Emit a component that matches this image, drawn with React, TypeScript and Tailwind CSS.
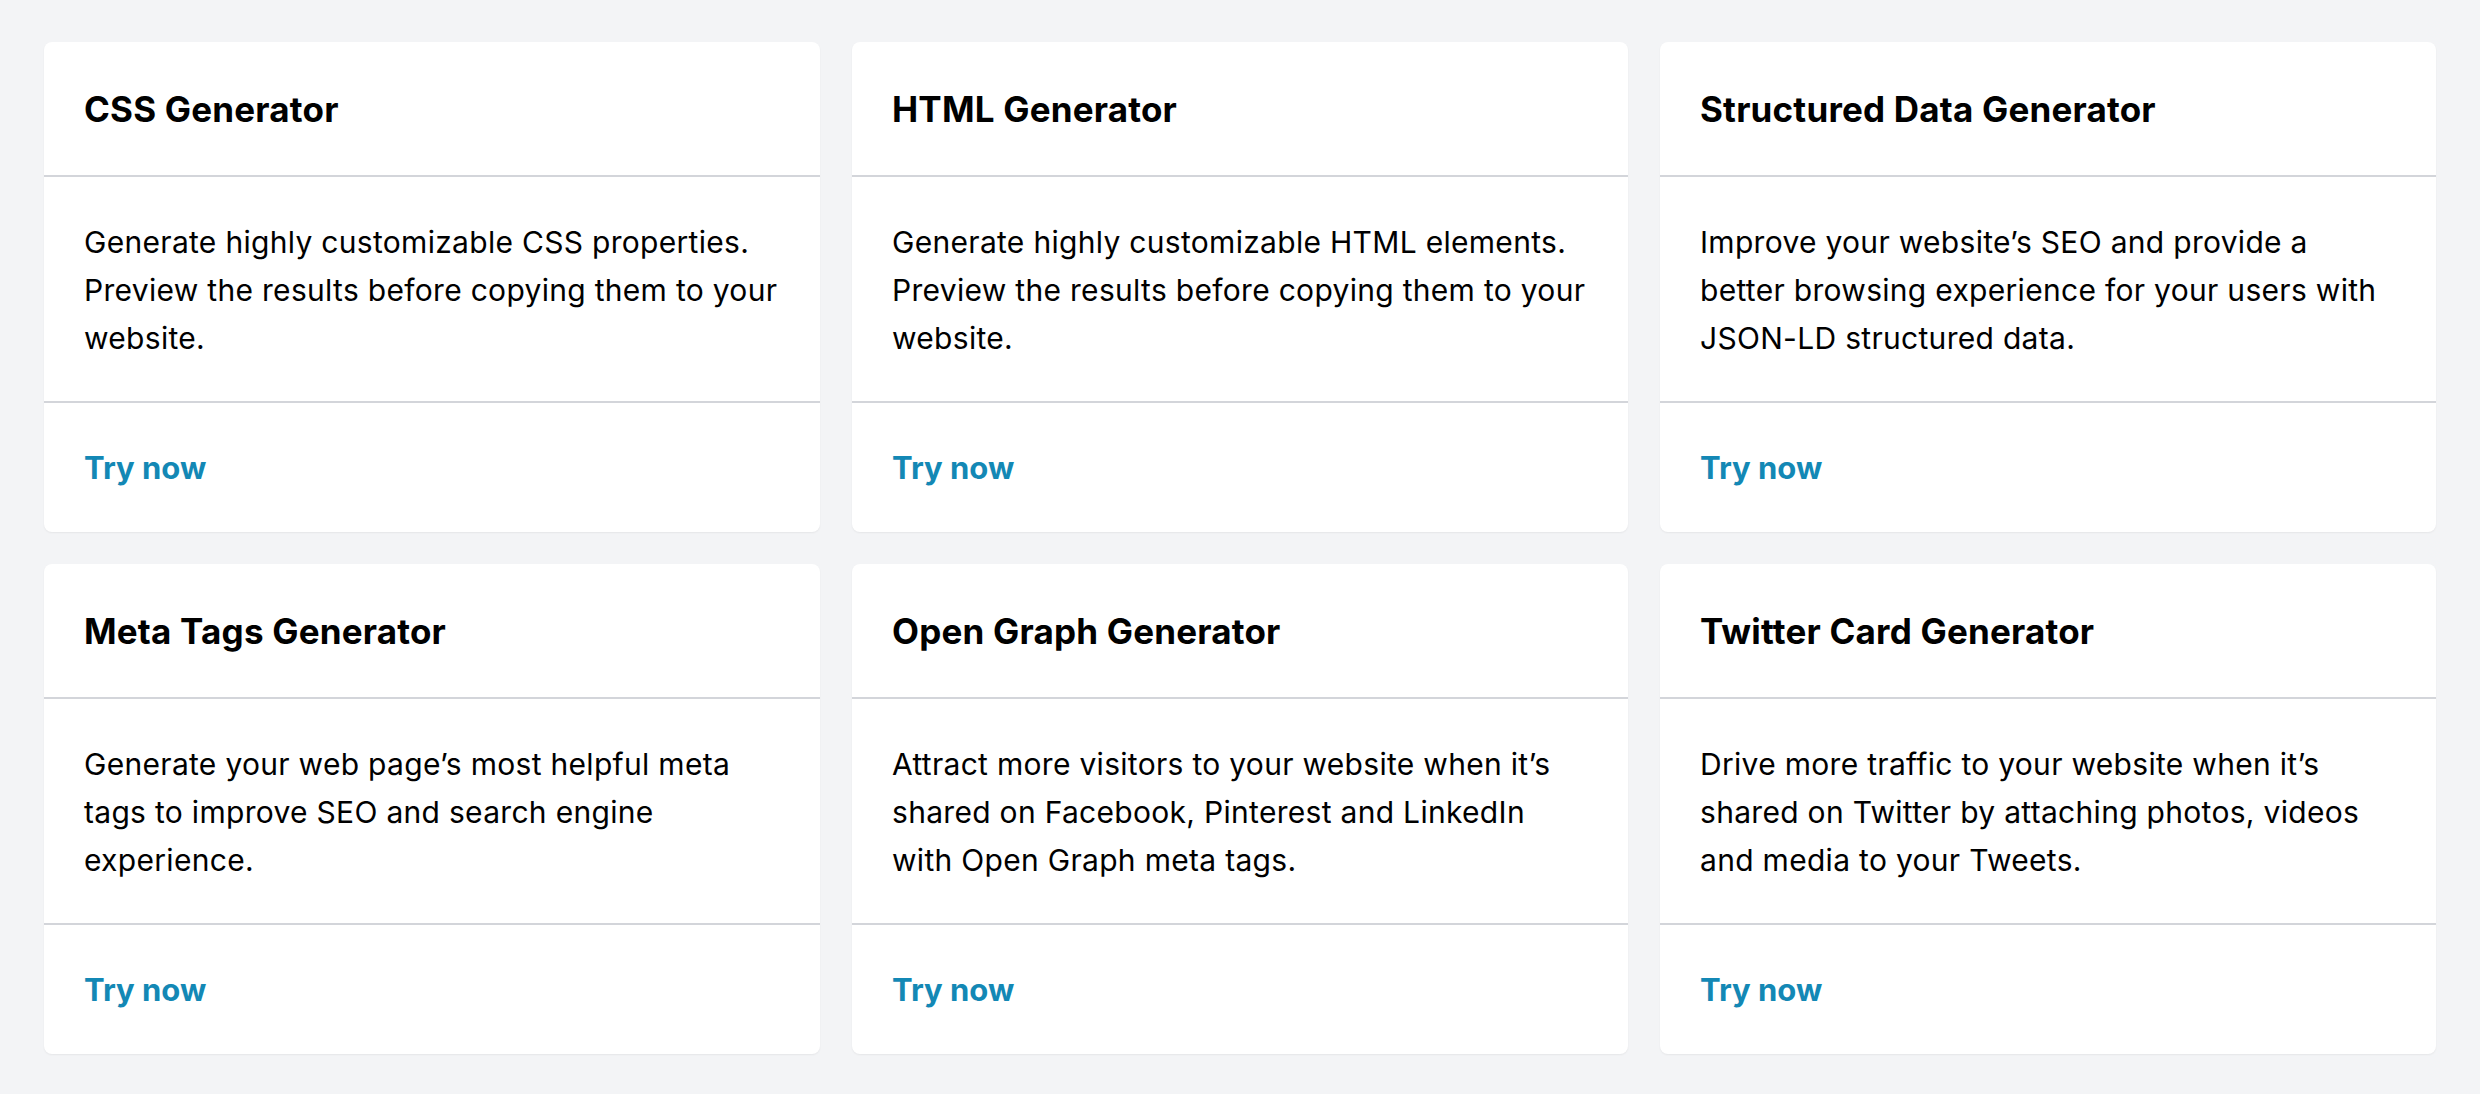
import React from "react";

const cards = [
  {
    title: "CSS Generator",
    body: "Generate highly customizable CSS properties. Preview the results before copying them to your website.",
  },
  {
    title: "HTML Generator",
    body: "Generate highly customizable HTML elements. Preview the results before copying them to your website.",
  },
  {
    title: "Structured Data Generator",
    body: "Improve your website\u2019s SEO and provide a better browsing experience for your users with JSON-LD structured data.",
  },
  {
    title: "Meta Tags Generator",
    body: "Generate your web page\u2019s most helpful meta tags to improve SEO and search engine experience.",
  },
  {
    title: "Open Graph Generator",
    body: "Attract more visitors to your website when it\u2019s shared on Facebook, Pinterest and LinkedIn with Open Graph meta tags.",
  },
  {
    title: "Twitter Card Generator",
    body: "Drive more traffic to your website when it\u2019s shared on Twitter by attaching photos, videos and media to your Tweets.",
  },
];

export default function App() {
  return (
    <div
      className="min-h-[1094px] w-full bg-[#f3f4f6] px-[44px] pt-[42px] pb-[40px]"
      style={{ fontFamily: "Inter, 'Noto Sans', sans-serif" }}
    >
      <div className="grid grid-cols-3 gap-[32px]">
        {cards.map((c) => (
          <div
            key={c.title}
            className="flex flex-col rounded-[8px] bg-white shadow-[0_1px_2px_rgba(0,0,0,0.06)]"
          >
            <div className="flex h-[135px] items-center border-b-2 border-[#d3d5da] px-[40px]">
              <h2 className="text-[35px] font-bold leading-[40px] tracking-[0.2px] text-black">{c.title}</h2>
            </div>
            <div className="h-[226px] border-b-2 border-[#d3d5da] px-[40px] pt-[41px] pb-[39px]">
              <p className="text-[30px] leading-[48px] tracking-[0.3px] text-black">{c.body}</p>
            </div>
            <div className="flex h-[129px] items-center px-[40px]">
              <a href="#" className="text-[31px] font-bold leading-[48px] text-[#1388b5]">
                Try now
              </a>
            </div>
          </div>
        ))}
      </div>
    </div>
  );
}
